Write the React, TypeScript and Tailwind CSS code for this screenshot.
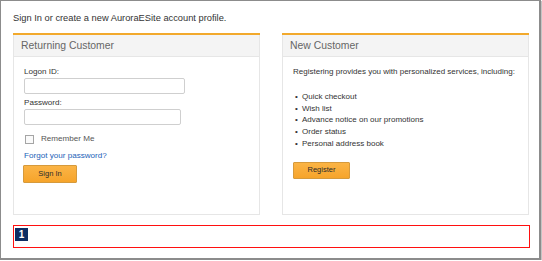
import React from "react";

const font = { fontFamily: '"Liberation Sans", Arial, sans-serif' };

function Panel({ title, children }: { title: string; children: React.ReactNode }) {
  return (
    <div className="flex flex-col h-[182px] border-t-2 border-[#f2a92c]">
      <div className="h-[22px] flex items-center bg-[#f4f4f4] border-x border-b border-[#e6e6e6] pl-[7px] text-[10.4px] text-[#666]">
        {title}
      </div>
      <div className="flex-1 border-x border-b border-[#e6e6e6] bg-white pl-[10px]">{children}</div>
    </div>
  );
}

export default function App() {
  return (
    <div style={font} className="w-[541px] h-[260px] bg-white border-l border-t border-r-2 border-b-2 border-[#8c8c8c] shadow-[1px_1px_0_#c4c4c4] pl-[12px] pr-[10px] pt-[10px] text-[#333]">
      <div className="text-[9.3px] leading-[14px] h-[14px]">Sign In or create a new AuroraESite account profile.</div>
      <div className="grid grid-cols-2 gap-[22px] mt-[8px]">
        <Panel title="Returning Customer">
          <div className="pt-[10px] text-[8.1px] leading-[10px] text-[#333]">
            <div>Logon ID:</div>
            <div className="mt-[1px] w-[161px] h-[16px] border border-[#cfcfcf] rounded-[2px] bg-white" />
            <div className="mt-[4px]">Password:</div>
            <div className="mt-[1px] w-[157px] h-[16px] border border-[#cfcfcf] rounded-[2px] bg-white" />
            <div className="flex items-center mt-[9px] h-[10px]">
              <div className="ml-[1px] w-[9px] h-[9px] border border-[#a5a5a5] bg-[#fafafa]" />
              <span className="ml-[7px] text-[#555]">Remember Me</span>
            </div>
            <div className="mt-[7px] text-[#1b62b8]">Forgot your password?</div>
            <div className="-ml-[1px] mt-[4px] w-[54px] h-[18px] flex items-center justify-center border border-[#d69a3c] bg-gradient-to-b from-[#fbb445] to-[#f6a42a] text-[7.5px] font-medium text-[#2a2a2a] rounded-[1px]">
              Sign In
            </div>
          </div>
        </Panel>
        <Panel title="New Customer">
          <div className="pt-[10px] text-[8px] leading-[10px] text-[#333]">
            <div>Registering provides you with personalized services, including:</div>
            <ul className="mt-[14px] leading-[11.7px]">
              {["Quick checkout", "Wish list", "Advance notice on our promotions", "Order status", "Personal address book"].map((t) => (
                <li key={t} className="flex">
                  <span className="w-[9px] pl-[2px]">•</span>
                  <span>{t}</span>
                </li>
              ))}
            </ul>
            <div className="mt-[12px] w-[57px] h-[17px] flex items-center justify-center border border-[#d69a3c] bg-gradient-to-b from-[#fbb445] to-[#f6a42a] text-[7.5px] font-medium text-[#2a2a2a] rounded-[1px]">
              Register
            </div>
          </div>
        </Panel>
      </div>
      <div className="mt-[10px] w-[517px] h-[23px] border-[1.5px] border-[#ff1010] pl-px pt-[1.5px]">
        <div className="w-[13px] h-[13px] bg-[#0d2d63] text-white text-[10px] font-bold leading-[13px] text-center">1</div>
      </div>
    </div>
  );
}
